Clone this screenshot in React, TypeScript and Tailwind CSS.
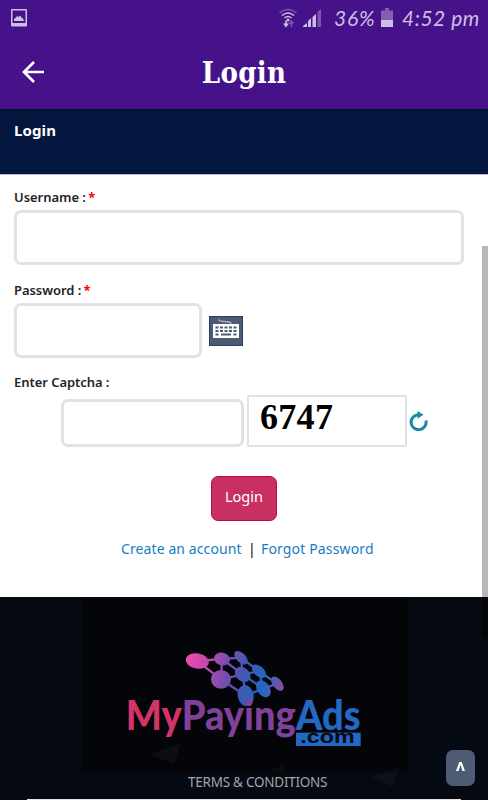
import type { ReactNode } from "react";

const nodes = [
    { x: 232, y: 63, rx: 35, ry: 23, r: 10 },
    { x: 306, y: 57, rx: 24, ry: 19, r: 10 },
    { x: 363, y: 53, rx: 25, ry: 14, r: 45 },
    { x: 303, y: 118, rx: 30, ry: 28, r: 0 },
    { x: 368, y: 103, rx: 26, ry: 20, r: 40 },
    { x: 417, y: 94, rx: 25, ry: 15, r: 42 },
    { x: 377, y: 167, rx: 24, ry: 32, r: -12 },
    { x: 430, y: 146, rx: 19, ry: 28, r: -35 },
    { x: 472, y: 131, rx: 14, ry: 25, r: -38 },
];

const edges = [
    [0, 1], [1, 2], [0, 3], [1, 3], [1, 4], [2, 4], [2, 5], [3, 4],
    [3, 6], [4, 6], [4, 5], [4, 7], [5, 7], [5, 8], [7, 8], [6, 7],
];

function Label({ children, required }: { children: ReactNode; required?: boolean }) {
    return (
        <label className="block h-5 text-[13px] leading-5 font-semibold tracking-[-0.05px] text-[#212529]">
            {children} {required && <span className="-ml-px text-[13px] font-bold text-[#ff0000]">*</span>}
        </label>
    );
}

function StatusBar() {
    return (
        <div className="flex h-9 items-center justify-between pr-2 pl-[11px] text-[#cdbfe3]">
            <svg width="16" height="18" viewBox="0 0 16 18">
                <path fillRule="evenodd" fill="currentColor" d="M1 0h14a1 1 0 0 1 1 1v15.500a1 1 0 0 1-1 1H1a1 1 0 0 1-1-1V1a1 1 0 0 1 1-1Zm.5 1.500v12.500h13V1.500Z" />
                <path fill="currentColor" d="M3 12v-2l2-1.500 1-1.500 1.500 1L9 6.500l1.500 2L12 9.500l1 2.500Z" />
            </svg>
            <div className="flex items-center">
                <svg width="18" height="20" viewBox="0 0 18 20" fill="none" stroke="currentColor" strokeWidth="1.600">
                    <path d="M.5 5Q9-2 17.500 5" opacity=".4" />
                    <path d="M3 7.500Q9 2.500 15 7.500M5.500 10Q9 7 12.500 10" />
                    <circle cx="9" cy="12" r="1.500" fill="currentColor" stroke="none" />
                    <path d="M7 12.500v5" />
                    <path d="M4 15.500h6l-3 4Z" fill="currentColor" stroke="none" />
                    <path d="M12.500 19v-5M10.500 15.500l2-2.500 2 2.500" opacity=".4" />
                </svg>
                <svg className="ml-1.5" width="19" height="18" viewBox="0 0 19 18" fill="currentColor">
                    <path d="M0 18v-1l4-3v4ZM5 18v-6l3-3v9ZM9.500 18V8l3.500-3v13Z" />
                    <path d="M14.500 18V3L18 0v18Z" opacity=".4" />
                </svg>
                <span className="ml-3 w-[43px] font-['Lato'] text-[21px] tracking-[0.8px] whitespace-nowrap italic">36%</span>
                <svg className="mb-0.5 ml-1" width="12" height="19" viewBox="0 0 12 19" fill="currentColor">
                    <path d="M0 2.500h4V0h4v2.500h4V12H0Z" opacity=".45" />
                    <path d="M0 12h12v7H0Z" />
                </svg>
                <span className="ml-[9px] w-[78px] font-['Lato'] text-[21px] tracking-[0.5px] whitespace-nowrap italic">4:52 pm</span>
            </div>
        </div>
    );
}

function KeyboardIcon() {
    return (
        <svg width="34" height="30" viewBox="0 0 34 30">
            <rect width="34" height="30" fill="#243f68" />
            <rect x="1" y="1" width="32" height="28" fill="#4c5a72" />
            <path d="M9.500 3.500q1 2 5 2t6 .5 1 2.500" fill="none" stroke="#a8afbb" strokeWidth="1.500" />
            <rect x="4" y="8" width="26" height="14" fill="#fff" />
            <path d="M6.500 11.500h21M6.500 15h21M6.500 18.500h3M24.500 18.500h3" stroke="#4c5a72" strokeWidth="2.200" strokeDasharray="3 1.500" />
            <path d="M12 18.500h10" stroke="#4c5a72" strokeWidth="2" />
        </svg>
    );
}

function Logo() {
    return (
        <svg className="ml-[38px]" width="250" height="120" viewBox="0 0 750 360">
            <defs>
                <linearGradient id="network" gradientUnits="userSpaceOnUse" x1="198" y1="60" x2="492" y2="130">
                    <stop offset="0" stopColor="#f149ad" />
                    <stop offset=".2" stopColor="#c04bab" />
                    <stop offset=".38" stopColor="#834bb0" />
                    <stop offset=".6" stopColor="#3e59b3" />
                    <stop offset=".82" stopColor="#2268c4" />
                    <stop offset="1" stopColor="#924aa0" />
                </linearGradient>
            </defs>
            <g fill="none" stroke="url(#network)" strokeWidth="7">
                {edges.map(([a, b]) => (
                    <path key={`${a}-${b}`} d={`M${nodes[a].x} ${nodes[a].y}L${nodes[b].x} ${nodes[b].y}`} />
                ))}
            </g>
            <g fill="url(#network)">
                {nodes.map((n) => {
                    const dx = n.rx * Math.cos((n.r * Math.PI) / 180);
                    const dy = n.rx * Math.sin((n.r * Math.PI) / 180);
                    const arc = `A${n.rx} ${n.ry} ${n.r} 1 1`;
                    return (
                        <path
                            key={n.x}
                            d={`M${n.x - dx} ${n.y - dy}${arc} ${n.x + dx} ${n.y + dy}${arc} ${n.x - dx} ${n.y - dy}`}
                        />
                    );
                })}
            </g>
            <text x="17" y="269" textLength="705" lengthAdjust="spacingAndGlyphs" fontFamily="Lato" fontWeight="900" fontSize="124">
                <tspan fill="#d13468">My</tspan>
                <tspan fill="#80419a">Paying</tspan>
                <tspan fill="#2368c4">Ads</tspan>
            </text>
            <rect x="528" y="278" width="194" height="40" fill="#2368c4" />
            <text x="541" y="310" textLength="163" lengthAdjust="spacingAndGlyphs" fontFamily="Liberation Sans" fontWeight="700" fontSize="54" fill="#050912">.com</text>
        </svg>
    );
}

export default function App() {
    return (
        <div className="relative flex h-[800px] w-[488px] flex-col overflow-hidden bg-white font-['Noto_Sans',sans-serif]">
            <header className="h-[109px] shrink-0 bg-[#461289]">
                <StatusBar />
                <div className="flex h-[72px] items-center">
                    <svg className="ml-[22px]" width="22" height="22" viewBox="0 0 22 22" fill="none" stroke="#fff" strokeWidth="2.700">
                        <path d="M22 11H2M12 1 2 11l10 10" />
                    </svg>
                    <h1 className="w-[400px] pt-1 text-center font-['DejaVu_Serif_Condensed','DejaVu_Serif',serif] text-[29px] font-bold tracking-[0.3px] text-white">
                        Login
                    </h1>
                </div>
            </header>

            <div className="h-[65px] shrink-0 border-t border-[#061130] bg-[#05173f] px-3.5 pt-2">
                <h2 className="text-[15px] leading-6 font-bold tracking-[0.1px] text-white">Login</h2>
            </div>

            <main className="h-[423px] shrink-0 border-t border-[#b5b9c2] px-3.5 pt-3">
                <Label required>Username :</Label>
                <input className="mt-[3px] block h-[55px] w-[450px] rounded-[7px] border-3 border-[#e1e2e7] outline-none" />

                <div className="mt-[15px]">
                    <Label required>Password :</Label>
                </div>
                <div className="mt-[3px] flex items-center">
                    <input type="password" className="h-[55px] w-[188px] rounded-[7px] border-3 border-[#e1e2e7] outline-none" />
                    <button className="ml-[7px] pt-px">
                        <KeyboardIcon />
                    </button>
                </div>

                <div className="mt-[14px]">
                    <Label>Enter Captcha :</Label>
                </div>
                <div className="mt-[3px] ml-[47px] flex h-[52px] items-end">
                    <input className="h-[48px] w-[183px] rounded-[7px] border-3 border-[#e1e2e7] outline-none" />
                    <div className="ml-[3px] h-[52px] w-[160px] border-2 border-[#e2e2e2] pl-[11px] font-['Liberation_Serif',serif] text-[36px] leading-[40px] font-bold tracking-[0.3px] text-black">
                        6747
                    </div>
                    <button className="mb-4 ml-[2px]">
                        <svg width="19" height="20" viewBox="0 0 19 20">
                            <path d="M10 3.700A7.500 7.500 0 1 0 16.900 9.500" fill="none" stroke="#168ba6" strokeWidth="3" />
                            <path d="m8.500 0 6 3.700-6 4Z" fill="#168ba6" />
                        </svg>
                    </button>
                </div>

                <button className="mt-[29px] ml-[197px] block h-[45px] w-[66px] rounded-[7px] border border-[#bd0755] bg-[#c83062] pb-[3px] text-[14.500px] text-white">
                    Login
                </button>
                <div className="mt-[18px] ml-[107px] flex w-[254px] items-center text-[14px] leading-5 whitespace-nowrap">
                    <a href="#" className="w-[122px] tracking-[0.1px] text-[#167cc2]">Create an account</a>
                    <span className="w-[18px] pl-[5px] text-black">|</span>
                    <a href="#" className="tracking-[0.15px] text-[#167cc2]">Forgot Password</a>
                </div>
            </main>

            <footer className="flex h-[203px] shrink-0 flex-col items-center bg-[#050a12]">
                <div className="mt-[2px] ml-0.5 h-[173px] w-[326px] bg-[#030508] pt-[41px]">
                    <Logo />
                </div>
                <p className="mt-px ml-14 w-[168px] text-[13.500px] leading-[18px] tracking-[-0.25px] whitespace-nowrap text-[#a2a5aa]">
                    TERMS &amp; CONDITIONS
                </p>
                <div className="mt-auto h-px w-[434px] bg-[#e7e3e6]" />
            </footer>

            {/* Faint triangles over the footer */}
            <svg className="pointer-events-none absolute bottom-0 left-0" width="488" height="60" viewBox="0 0 488 60" fill="#fff">
                <path d="m149 14 32-11-7 21Z" opacity=".04" />
                <path d="m266 31 19-7-2 8Z" opacity=".03" />
                <path d="m371 37 28-10-6 20Z" opacity=".03" />
            </svg>

            {/* Scrollbar */}
            <div className="absolute top-[246px] right-0 h-[351px] w-[6px] bg-[#b7b7b7]" />
            <div className="absolute top-[597px] right-0 h-[41px] w-[6px] bg-[#030508]" />

            <button className="absolute top-[750px] right-[13px] flex h-9 w-[29px] items-start justify-center rounded-[7px] bg-[#4d5b73] pt-[12px]">
                <svg width="9" height="10" viewBox="0 0 9 10" fill="#fff">
                    <path d="M3.300 0h2.400L9 9H6.500l-2-6.200L2.500 9H0Z" />
                </svg>
            </button>
        </div>
    );
}
